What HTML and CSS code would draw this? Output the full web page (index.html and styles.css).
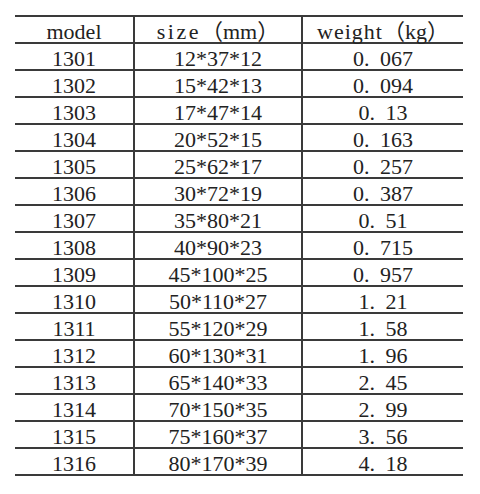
FILE: index.html
```html
<!DOCTYPE html>
<html>
<head>
<meta charset="utf-8">
<link rel="stylesheet" href="styles.css">
</head>
<body>
<div class="sheet">
  <div class="row head">
    <div class="cell c1">model</div>
    <div class="cell c2"><span class="w-size">size</span>（mm）</div>
    <div class="cell c3"><span class="w-weight">weight</span>（kg）</div>
  </div>
  <div class="row"><div class="cell c1">1301</div><div class="cell c2">12*37*12</div><div class="cell c3">0. 067</div></div>
  <div class="row"><div class="cell c1">1302</div><div class="cell c2">15*42*13</div><div class="cell c3">0. 094</div></div>
  <div class="row"><div class="cell c1">1303</div><div class="cell c2">17*47*14</div><div class="cell c3">0. 13</div></div>
  <div class="row"><div class="cell c1">1304</div><div class="cell c2">20*52*15</div><div class="cell c3">0. 163</div></div>
  <div class="row"><div class="cell c1">1305</div><div class="cell c2">25*62*17</div><div class="cell c3">0. 257</div></div>
  <div class="row"><div class="cell c1">1306</div><div class="cell c2">30*72*19</div><div class="cell c3">0. 387</div></div>
  <div class="row"><div class="cell c1">1307</div><div class="cell c2">35*80*21</div><div class="cell c3">0. 51</div></div>
  <div class="row"><div class="cell c1">1308</div><div class="cell c2">40*90*23</div><div class="cell c3">0. 715</div></div>
  <div class="row"><div class="cell c1">1309</div><div class="cell c2">45*100*25</div><div class="cell c3">0. 957</div></div>
  <div class="row"><div class="cell c1">1310</div><div class="cell c2">50*110*27</div><div class="cell c3">1. 21</div></div>
  <div class="row"><div class="cell c1">1311</div><div class="cell c2">55*120*29</div><div class="cell c3">1. 58</div></div>
  <div class="row"><div class="cell c1">1312</div><div class="cell c2">60*130*31</div><div class="cell c3">1. 96</div></div>
  <div class="row"><div class="cell c1">1313</div><div class="cell c2">65*140*33</div><div class="cell c3">2. 45</div></div>
  <div class="row"><div class="cell c1">1314</div><div class="cell c2">70*150*35</div><div class="cell c3">2. 99</div></div>
  <div class="row"><div class="cell c1">1315</div><div class="cell c2">75*160*37</div><div class="cell c3">3. 56</div></div>
  <div class="row"><div class="cell c1">1316</div><div class="cell c2">80*170*39</div><div class="cell c3">4. 18</div></div>
</div>
</body>
</html>
```
FILE: styles.css
```css
html, body {
  margin: 0;
  padding: 0;
  background: #ffffff;
}

body {
  font-family: "Liberation Serif", "Noto Sans CJK SC", serif;
  font-size: 22px;
  color: #222222;
}

.sheet {
  width: 448px;
  margin: 15px 0 0 15px;
  border-top: 2px solid #3a3a3a;
}

.row {
  display: grid;
  grid-template-columns: 120px 168px 160px;
  border-bottom: 2px solid #3a3a3a;
}

.cell {
  box-sizing: border-box;
  height: 25px;
  padding-top: 5px;
  line-height: 20px;
  text-align: center;
  white-space: nowrap;
}

.c1, .c2 {
  border-right: 2px solid #3a3a3a;
}

.c3 {
  word-spacing: 5px;
}

.w-size {
  letter-spacing: 2.5px;
}

.w-weight {
  letter-spacing: 1px;
}
```
